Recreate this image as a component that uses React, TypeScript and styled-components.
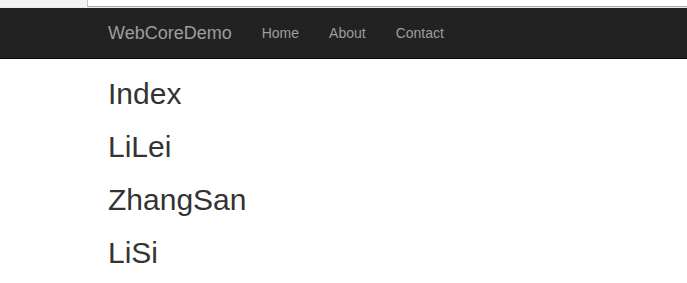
import styled, { createGlobalStyle } from "styled-components";

const GlobalStyle = createGlobalStyle`
    html, body {
        margin: 0;
        padding: 0;
        background: #ffffff;
        font-family: "Liberation Sans", Arial, sans-serif;
        color: #333333;
    }
    * {
        box-sizing: border-box;
    }
`;

const links = ["Home", "About", "Contact"];
const people = ["Index", "LiLei", "ZhangSan", "LiSi"];

export default function App() {
    return (
        <>
            <GlobalStyle />
            <ChromeStrip>
                <ChromeSide />
                <AddressBox />
            </ChromeStrip>
            <Navbar>
                <NavInner>
                    <Brand href="#">WebCoreDemo</Brand>
                    <NavList>
                        {links.map((link) => (
                            <li key={link}>
                                <NavLink href="#">{link}</NavLink>
                            </li>
                        ))}
                    </NavList>
                </NavInner>
            </Navbar>
            <Content>
                {people.map((name) => (
                    <Heading key={name}>{name}</Heading>
                ))}
            </Content>
        </>
    );
}

const ChromeStrip = styled.div`
    display: flex;
    height: 8px;
    background: #ebebeb;
`;

const ChromeSide = styled.div`
    width: 87px;
    height: 7px;
    background: #f2f2f2;
`;

const AddressBox = styled.div`
    flex: 1;
    height: 7px;
    background: #ffffff;
    border-left: 1px solid #c4c4c4;
    border-bottom: 1px solid #a8a8a8;
`;

const Navbar = styled.nav`
    height: 51px;
    background: #222222;
    border-bottom: 1px solid #080808;
`;

const NavInner = styled.div`
    display: flex;
    align-items: center;
    height: 50px;
    padding-left: 93px;
`;

const Brand = styled.a`
    padding: 15px;
    font-size: 18px;
    line-height: 20px;
    color: #9d9d9d;
    text-decoration: none;
`;

const NavList = styled.ul`
    display: flex;
    margin: 0;
    padding: 0;
    list-style: none;
`;

const NavLink = styled.a`
    display: block;
    padding: 15px;
    font-size: 14px;
    line-height: 20px;
    color: #9d9d9d;
    text-decoration: none;
`;

const Content = styled.main`
    display: flow-root;
    padding: 0 108px;
`;

const Heading = styled.h2`
    margin: 20px 0 0;
    font-size: 30px;
    font-weight: 500;
    line-height: 1.1;
    color: #333333;

    &:first-child {
        margin-top: 18px;
    }
`;
